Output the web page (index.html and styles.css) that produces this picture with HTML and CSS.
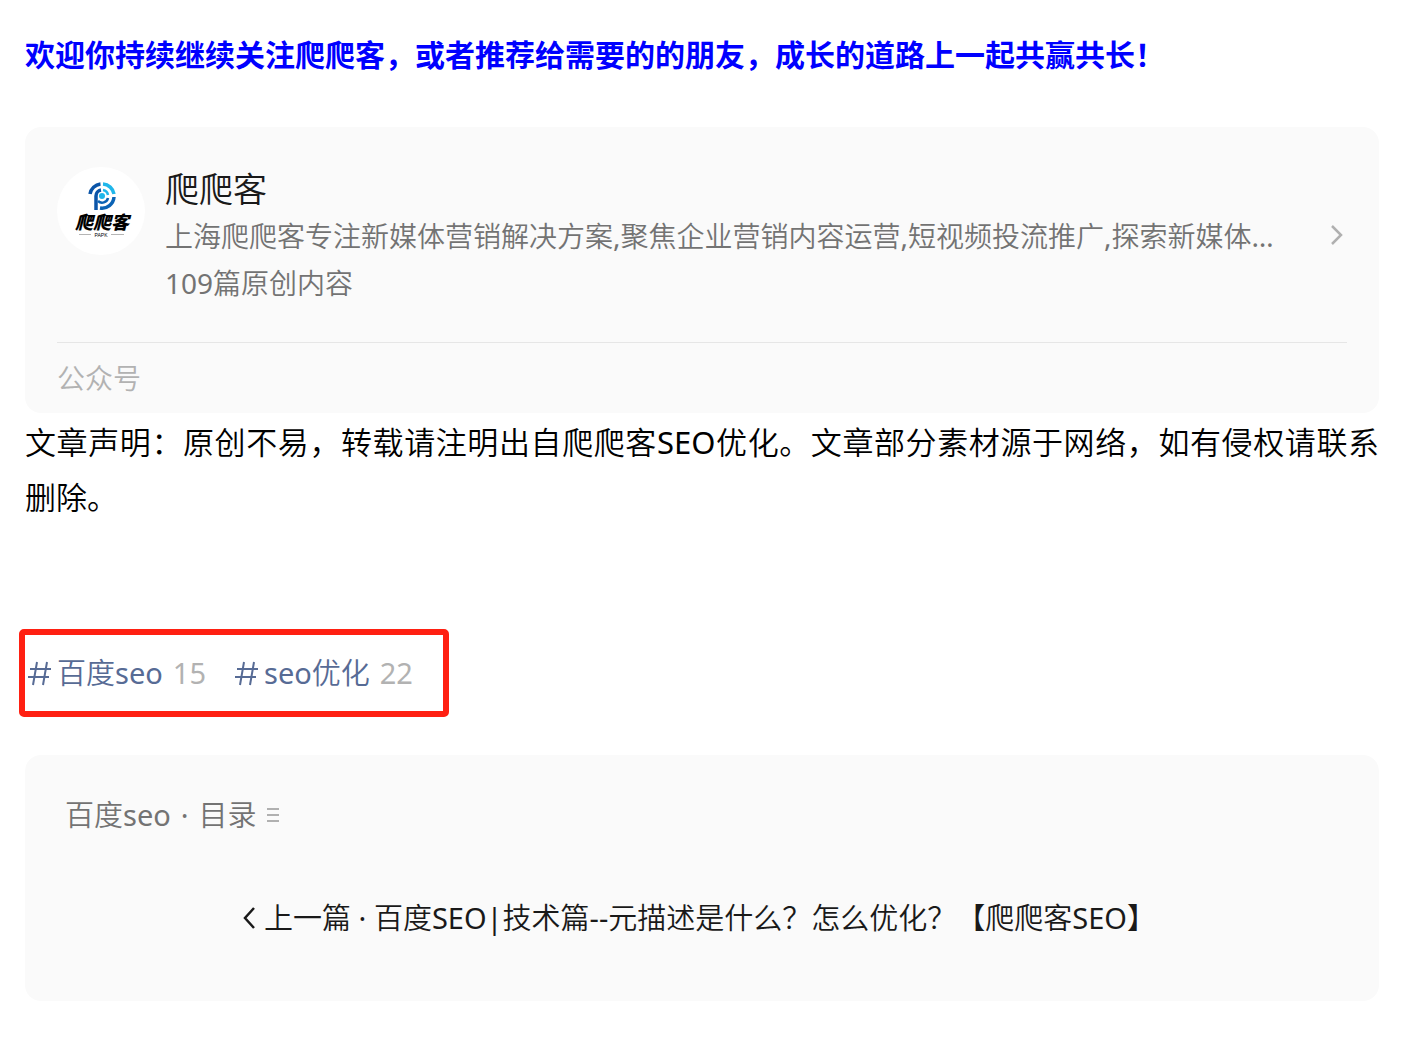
FILE: index.html
```html
<!DOCTYPE html>
<html lang="zh-CN">
<head>
<meta charset="utf-8">
<meta name="viewport" content="width=device-width, initial-scale=1">
<title>爬爬客</title>
<link rel="stylesheet" href="styles.css">
</head>
<body>
<main class="article">
  <p class="welcome">欢迎你持续继续关注爬爬客，或者推荐给需要的的朋友，成长的道路上一起共赢共长！</p>

  <section class="profile">
    <a class="profile-link" href="#profile">
      <svg class="avatar" viewBox="0 0 88 88" aria-hidden="true">
        <circle cx="44" cy="44" r="44" fill="#fff"/>
        <g fill="none" stroke-width="3.500">
          <path d="M33 27A12 12 0 0 1 43.500 17" stroke="#0b55a8"/>
          <path d="M46 17A12 12 0 0 1 57 27" stroke="#1fb6ea"/>
          <path d="M57 30A12 12 0 0 1 43 41" stroke="#0b63b5"/>
          <path d="M39 43V29A6 6 0 0 1 44 23" stroke="#0b55a8"/>
          <path d="M46 23A6 6 0 0 1 51 28" stroke="#1fb6ea" stroke-width="2.500"/>
          <path d="M51 31A6 6 0 0 1 41 34" stroke="#0b63b5" stroke-width="2.500"/>
        </g>
        <circle cx="45" cy="29" r="3" fill="#1fb6ea"/>
        <text class="logo-name" x="45" y="62" text-anchor="middle">爬爬客</text>
        <path d="M22 67.500H34M54 67.500H67" stroke="#b5b5b5"/>
        <text class="logo-sub" x="44" y="70" text-anchor="middle">PAPK</text>
      </svg>
      <span class="profile-text">
        <strong class="profile-name">爬爬客</strong>
        <span class="profile-desc">上海爬爬客专注新媒体营销解决方案,聚焦企业营销内容运营,短视频投流推广,探索新媒体…</span>
        <span class="profile-desc">109篇原创内容</span>
      </span>
      <svg class="chevron" viewBox="0 0 14 22" aria-hidden="true"><path d="M2 2L11 11L2 20" fill="none" stroke="#b0b0b0" stroke-width="2.500"/></svg>
    </a>
    <div class="profile-type">公众号</div>
  </section>

  <p class="notice">文章声明：原创不易，转载请注明出自爬爬客SEO优化。文章部分素材源于网络，如有侵权请联系删除。</p>

  <nav class="tags">
    <a class="tag" href="#baidu-seo"><svg class="hash" viewBox="0 0 24 26" aria-hidden="true"><path d="M9 2L5 25M19 2L15 25M2 9H23M0 17H21" fill="none" stroke="#576b95" stroke-width="2"/></svg>百度seo <span class="count">15</span></a>
    <a class="tag" href="#seo"><svg class="hash" viewBox="0 0 24 26" aria-hidden="true"><path d="M9 2L5 25M19 2L15 25M2 9H23M0 17H21" fill="none" stroke="#576b95" stroke-width="2"/></svg>seo优化 <span class="count">22</span></a>
  </nav>

  <section class="album">
    <a class="album-title" href="#album"><span>百度seo</span><span>·</span><span>目录</span><svg class="menu" viewBox="0 0 12 16" aria-hidden="true"><path d="M0 2H12M0 8H12M0 14H12" stroke="#b0b0b0" stroke-width="2"/></svg></a>
    <a class="previous" href="#previous"><svg class="back" viewBox="0 0 14 22" aria-hidden="true"><path d="M12 1L3 11L12 21" fill="none" stroke="#191919" stroke-width="2.500"/></svg>上一篇 · 百度SEO|技术篇--元描述是什么？怎么优化？【爬爬客SEO】</a>
  </section>
</main>
</body>
</html>
```
FILE: styles.css
```css
* { box-sizing: border-box; }
body {
  margin: 0;
  background: #fff;
  color: #000;
  font-family: "Noto Sans Light", "Noto Sans", "Noto Sans CJK SC DemiLight", "Noto Sans CJK SC", sans-serif;
}
a { color: inherit; text-decoration: none; }
svg { display: block; flex: none; }
p { margin: 0; }
.article { padding: 25px 30px 60px 25px; }
.welcome {
  color: #00f;
  font-family: "Noto Sans CJK SC", sans-serif;
  font-size: 30px;
  font-weight: 700;
  line-height: 56px;
}
.profile {
  margin-top: 46px;
  padding: 40px 32px 0;
  border-radius: 16px;
  background: #fafafa;
}
.profile-link {
  display: flex;
  padding-bottom: 35px;
  border-bottom: 1px solid #e6e6e6;
}
.avatar { width: 88px; height: 88px; }
.logo-name {
  font-family: "Liberation Sans", "Noto Sans CJK SC", sans-serif;
  font-size: 18px;
  font-weight: 900;
  font-style: italic;
}
.logo-sub {
  font-family: "Liberation Sans", sans-serif;
  font-size: 5px;
}
.profile-text {
  flex: 1;
  min-width: 0;
  margin-left: 20px;
}
.profile-name {
  display: block;
  margin-bottom: 2px;
  color: #191919;
  font-size: 34px;
  font-weight: 400;
  line-height: 44px;
}
.profile-desc {
  display: block;
  overflow: hidden;
  color: #737373;
  font-size: 28px;
  line-height: 47px;
  white-space: nowrap;
  text-overflow: ellipsis;
}
.chevron {
  width: 14px;
  height: 22px;
  margin: 57px 3px 0 20px;
}
.profile-type {
  color: #b2b2b2;
  font-size: 28px;
  line-height: 70px;
}
.notice {
  margin-top: 2px;
  font-size: 31px;
  line-height: 55px;
  text-align: justify;
}
.tags {
  display: flex;
  gap: 29px;
  width: fit-content;
  margin: 104px 0 0 -6px;
  padding: 0 30px 0 3px;
  border: 6px solid #ff2012;
  border-radius: 5px;
  color: #576b95;
  font-size: 29px;
  line-height: 76px;
}
.tag { display: flex; align-items: center; }
.hash { width: 24px; height: 26px; margin-right: 5px; }
.count { margin-left: 10px; color: #b2b2b2; }
.album {
  margin-top: 38px;
  padding: 35px 40px 55px;
  border-radius: 16px;
  background: #fafafa;
  font-size: 29px;
}
.album-title {
  display: flex;
  align-items: center;
  gap: 10px;
  color: #737373;
  line-height: 50px;
}
.menu { width: 12px; height: 16px; }
.previous {
  display: flex;
  align-items: center;
  justify-content: center;
  margin: 50px 6px 0 0;
  color: #191919;
  line-height: 56px;
}
.back { width: 14px; height: 22px; margin-right: 8px; }
```
